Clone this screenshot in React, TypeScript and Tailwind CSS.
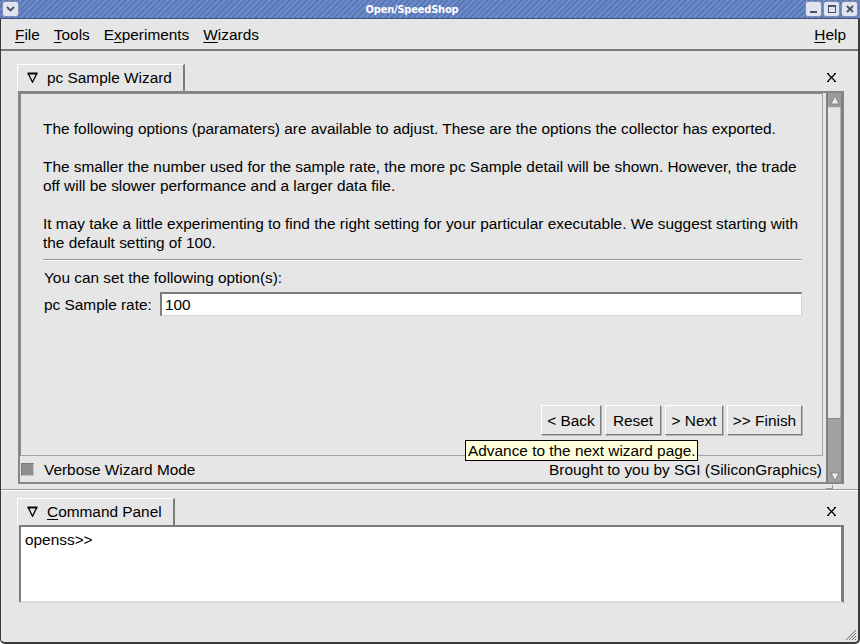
import React from "react";

function TitleButton({ children }: { children: React.ReactNode }) {
  return (
    <div className="w-[17px] h-[16px] rounded-[3px] border border-[#7f8db0] bg-[#dfe4ee] flex items-center justify-center">
      {children}
    </div>
  );
}

function TabTriangle() {
  return (
    <svg width="11" height="11" viewBox="0 0 11 11" className="shrink-0">
      <path d="M0.5 1.5 H10.5" stroke="#000" strokeWidth="2" />
      <path d="M1.2 1.5 L5.5 10.2 L9.8 1.5" stroke="#000" strokeWidth="1.3" fill="none" />
    </svg>
  );
}

function CloseX() {
  return (
    <svg width="9" height="9" viewBox="0 0 9 9">
      <path d="M1 1 L8 8 M8 1 L1 8" stroke="#000" strokeWidth="1.2" />
      <path d="M0 0.5 H2 M7 0.5 H9 M0 8.5 H2 M7 8.5 H9" stroke="#000" strokeWidth="1" />
    </svg>
  );
}

function WizButton({ label, width }: { label: string; width: string }) {
  return (
    <div
      className={`${width} h-[30px] flex items-center justify-center bg-[#e6e6e6] border border-t-white border-l-white border-r-[#7c7c7c] border-b-[#7c7c7c] shadow-[1px_1px_0_#b4b4b4]`}
    >
      {label}
    </div>
  );
}

export default function App() {
  return (
    <div className="relative w-[860px] h-[644px] overflow-hidden bg-white text-black font-['Liberation_Sans',Arial,sans-serif] text-[15.4px] leading-[19px] flex flex-col">
      {/* Title bar */}
      <div className="h-[19px] shrink-0 flex items-center px-[2px] bg-[repeating-linear-gradient(135deg,#5a77b6_0px,#5a77b6_2px,#6d8bcb_2px,#6d8bcb_4px)] border-b border-[#3e5286]">
        <TitleButton>
          <svg width="9" height="6" viewBox="0 0 9 6">
            <path d="M1 1 L4.5 4.5 L8 1" stroke="#4a5068" strokeWidth="1.8" fill="none" />
          </svg>
        </TitleButton>
        <div className="flex-1 text-center text-white font-bold text-[11px] leading-[17px] font-['DejaVu_Sans_Condensed','DejaVu_Sans',sans-serif] tracking-[-0.2px]">
          Open/SpeedShop
        </div>
        <div className="flex gap-[1px]">
          <TitleButton>
            <div className="w-[7px] h-[2px] bg-[#4a5068] mt-[5px]" />
          </TitleButton>
          <TitleButton>
            <div className="w-[8px] h-[8px] border border-[#4a5068] border-t-2" />
          </TitleButton>
          <TitleButton>
            <svg width="8" height="8" viewBox="0 0 8 8">
              <path d="M1 1 L7 7 M7 1 L1 7" stroke="#4a5068" strokeWidth="1.8" />
            </svg>
          </TitleButton>
        </div>
      </div>

      {/* Window body */}
      <div className="flex-1 flex flex-col bg-[#e6e6e6] border-l border-r-2 border-b-2 border-[#3a3a3a] rounded-b-[5px] relative">
        {/* Menu bar */}
        <div className="h-[30px] shrink-0 flex items-center pl-[14px] pr-[12px]">
          <div className="flex gap-[14px]">
            <span><span className="underline underline-offset-2">F</span>ile</span>
            <span><span className="underline underline-offset-2">T</span>ools</span>
            <span>E<span className="underline underline-offset-2">x</span>periments</span>
            <span><span className="underline underline-offset-2">W</span>izards</span>
          </div>
          <div className="flex-1" />
          <span><span className="underline underline-offset-2">H</span>elp</span>
        </div>
        <div className="h-[2px] shrink-0 bg-[#7a7a7a]" />

        {/* Wizard tab header */}
        <div className="mt-[13px] h-[27px] shrink-0 flex items-end">
          <div className="ml-[16px] w-[168px] h-[27px] flex items-center gap-[9px] pl-[9px] pb-[1px] border-t border-l border-white border-r-2 border-r-[#7c7c7c]">
            <TabTriangle />
            <span>pc Sample Wizard</span>
          </div>
          <div className="flex-1" />
          <div className="mr-[22px] self-center">
            <CloseX />
          </div>
        </div>

        {/* Wizard panel */}
        <div className="ml-[17px] w-[826px] h-[393px] shrink-0 flex border-l-2 border-t-2 border-b-2 border-r border-[#868686]">
          <div className="w-[803px] flex flex-col">
            <div className="h-[363px] border border-t-[#8a8a8a] border-l-[#8a8a8a] border-r-[#a4a4a4] border-b-[#a4a4a4] pt-[25px] pl-[22px] pr-[20px] flex flex-col whitespace-nowrap">
              <div className="mb-[19px]">
                The following options (paramaters) are available to adjust. These are the options the collector has exported.
              </div>
              <div className="mb-[19px]">
                The smaller the number used for the sample rate, the more pc Sample detail will be shown. However, the trade
                <br />
                off will be slower performance and a larger data file.
              </div>
              <div>
                It may take a little experimenting to find the right setting for your particular executable. We suggest starting with
                <br />
                the default setting of 100.
              </div>
              <div className="mt-[7px] h-[1px] bg-[#9a9a9a]" />
              <div className="h-[1px] bg-white" />
              <div className="mt-[7px] pl-[1px]">You can set the following option(s):</div>
              <div className="mt-[5px] h-[24px] flex items-center pl-[1px]">
                <span className="w-[116px]">pc Sample rate:</span>
                <div className="flex-1 h-[24px] bg-white border-t-2 border-l-2 border-[#7c7c7c] border-r border-b border-r-[#d4d4d4] border-b-[#d4d4d4] pl-[3px] flex items-center">
                  100
                </div>
              </div>
              <div className="mt-[89px] flex justify-end gap-[4px]">
                <WizButton label="< Back" width="w-[60px]" />
                <WizButton label="Reset" width="w-[56px]" />
                <WizButton label="> Next" width="w-[58px]" />
                <WizButton label=">> Finish" width="w-[75px]" />
              </div>
            </div>
            <div className="flex-1 flex items-center justify-between pr-[1px]">
              <div className="flex items-center">
                <div className="ml-[1px] w-[13px] h-[13px] bg-[#8e8e8e] border border-t-[#7a7a7a] border-l-[#7a7a7a] border-r-[#c4c4c4] border-b-[#c4c4c4]" />
                <span className="ml-[10px]">Verbose Wizard Mode</span>
              </div>
              <span>Brought to you by SGI (SiliconGraphics)</span>
            </div>
          </div>

          {/* Scrollbar */}
          <div className="ml-[3px] w-[17px] flex flex-col border-l-2 border-r-2 border-[#808080]">
            <div className="h-[14px] bg-[#9c9c9c] flex items-center justify-center">
              <svg width="10" height="10" viewBox="0 0 10 10">
                <path d="M5 1 L9 9 H1 Z" fill="#ececec" stroke="#7a7a7a" strokeWidth="0.8" />
              </svg>
            </div>
            <div className="flex-1 flex flex-col bg-[#e6e6e6]">
              <div className="flex-1 border-t border-[#cfcfcf] border-r border-r-[#b0b0b0]" />
              <div className="h-[52px] bg-[#a2a2a2] border-t border-[#8a8a8a]" />
            </div>
            <div className="h-[12px] bg-[#a2a2a2] flex items-center justify-center">
              <svg width="10" height="9" viewBox="0 0 10 9">
                <path d="M1 1 H9 L5 8.5 Z" fill="#ececec" stroke="#7a7a7a" strokeWidth="0.8" />
              </svg>
            </div>
          </div>
        </div>

        {/* Splitter */}
        <div className="relative h-[14px] shrink-0">
          <div className="absolute left-0 right-0 top-[5px] h-[1px] bg-[#9a9a9a]" />
          <div className="absolute left-0 right-0 top-[6px] h-[1px] bg-white" />
          <div className="absolute left-[825px] top-[1px] w-[7px] h-[4px] border-r border-b border-[#9a9a9a]" />
        </div>

        {/* Command panel tab header */}
        <div className="h-[27px] shrink-0 flex items-end">
          <div className="ml-[16px] w-[158px] h-[27px] flex items-center gap-[9px] pl-[9px] pb-[1px] border-t border-l border-white border-r-2 border-r-[#7c7c7c]">
            <TabTriangle />
            <span><span className="underline underline-offset-2">C</span>ommand Panel</span>
          </div>
          <div className="flex-1" />
          <div className="mr-[22px] self-center">
            <CloseX />
          </div>
        </div>

        {/* Command text area */}
        <div className="ml-[18px] w-[825px] h-[78px] shrink-0 bg-white border-t-2 border-l-2 border-[#7c7c7c] border-r-[3px] border-b-2 border-b-[#dadada] pl-[4px] pt-[3px]">
          openss&gt;&gt;
        </div>

        <div className="flex-1" />

        {/* Resize grip */}
        <svg className="absolute right-[1px] bottom-[1px]" width="13" height="13" viewBox="0 0 13 13">
          <path d="M12 2 L2 12 M12 5 L5 12 M12 8 L8 12 M12 11 L11 12" stroke="#6a6a6a" strokeWidth="1" />
        </svg>
      </div>

      {/* Tooltip */}
      <div className="absolute left-[465px] top-[440px] w-[233px] h-[21px] bg-[#ffffdc] border border-black pl-[2px] flex items-center whitespace-nowrap">
        Advance to the next wizard page.
      </div>
    </div>
  );
}
